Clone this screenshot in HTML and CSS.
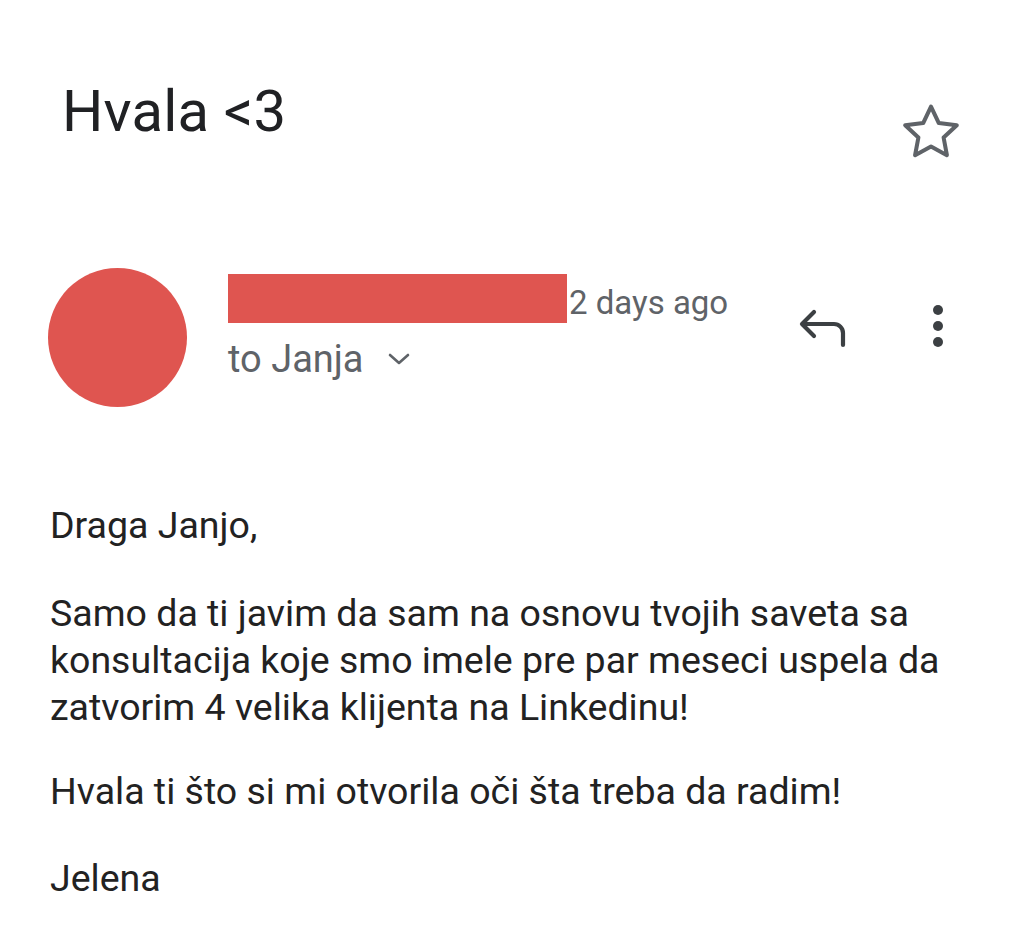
FILE: index.html
```html
<!DOCTYPE html>
<html lang="sr">
<head>
<meta charset="utf-8">
<title>Hvala &lt;3</title>
<link rel="stylesheet" href="styles.css">
</head>
<body>
<main class="mail">
  <header class="subject-row">
    <h1 class="subject">Hvala &lt;3</h1>
    <svg class="star" viewBox="0 0 24 24" aria-label="Star">
      <path d="M12 3.2l2.6 5.5 6 .7-4.4 4.1 1.1 5.9L12 16.5l-5.3 2.9 1.1-5.9-4.4-4.1 6-.7z" fill="none" stroke="#5f6368" stroke-width="1.35" stroke-linejoin="round"/>
    </svg>
  </header>

  <section class="sender-row">
    <div class="avatar"></div>
    <div class="sender-info">
      <div class="sender-line">
        <span class="redacted"></span>
        <span class="time">2 days ago</span>
      </div>
      <div class="recipient">to Janja
        <svg class="chevron" viewBox="0 0 24 14"><path d="M3 3l9 8 9-8" fill="none" stroke="#5f6368" stroke-width="2.6" stroke-linecap="round" stroke-linejoin="round"/></svg>
      </div>
    </div>
    <div class="actions">
      <svg class="reply" viewBox="0 0 52 40" aria-label="Reply">
        <path d="M46 37V25a9 9 0 0 0-9-9H6M17 4 5 16l12 12" fill="none" stroke="#3c4043" stroke-width="4.2" stroke-linecap="round" stroke-linejoin="round"/>
      </svg>
      <svg class="more" viewBox="0 0 12 44" aria-label="More">
        <circle cx="6" cy="6" r="5" fill="#3c4043"/>
        <circle cx="6" cy="22" r="5" fill="#3c4043"/>
        <circle cx="6" cy="38" r="5" fill="#3c4043"/>
      </svg>
    </div>
  </section>

  <article class="body">
    <p class="para">Draga Janjo,</p>
    <p class="para para-tight">Samo da ti javim da sam na osnovu tvojih saveta sa<br>konsultacija koje smo imele pre par meseci uspela da<br>zatvorim 4 velika klijenta na Linkedinu!</p>
    <p class="para para-mid">Hvala ti što si mi otvorila oči šta treba da radim!</p>
    <p class="para">Jelena</p>
  </article>
</main>
</body>
</html>
```

FILE: styles.css
```css
html, body {
  margin: 0;
  padding: 0;
  background: #ffffff;
}

body {
  font-family: Roboto, "Liberation Sans", sans-serif;
  color: #222222;
}

.mail {
  width: 1024px;
  height: 944px;
  box-sizing: border-box;
}

.subject-row {
  display: flex;
  justify-content: space-between;
  align-items: flex-start;
  padding: 77px 57px 0 62px;
}

.subject {
  margin: 0;
  font-weight: 400;
  font-size: 58px;
  line-height: 68px;
  color: #202124;
  letter-spacing: 0.2px;
}

.star {
  width: 72px;
  height: 72px;
  margin-top: 20px;
}

.sender-row {
  display: flex;
  align-items: flex-start;
  padding: 99px 0 0 48px;
}

.avatar {
  width: 139px;
  height: 139px;
  border-radius: 50%;
  background: #df5550;
  flex: none;
}

.sender-info {
  margin-left: 41px;
  padding-top: 6px;
  width: 520px;
}

.sender-line {
  display: flex;
  align-items: flex-start;
}

.redacted {
  display: block;
  width: 339px;
  height: 49px;
  background: #df5550;
}

.time {
  font-size: 33px;
  line-height: 49px;
  color: #5f6368;
  margin-left: 2px;
  margin-top: 4px;
}

.recipient {
  display: flex;
  align-items: center;
  font-size: 38px;
  line-height: 44px;
  color: #5f6368;
  margin-top: 10px;
}

.chevron {
  width: 24px;
  height: 14px;
  margin-left: 23px;
  margin-top: 0;
}

.actions {
  display: flex;
  align-items: flex-start;
  margin-left: 49px;
  padding-top: 36px;
}

.reply {
  width: 52px;
  height: 40px;
  margin-top: 4px;
}

.more {
  width: 12px;
  height: 44px;
  margin-left: 83px;
}

.body {
  padding: 95px 0 0 50px;
  font-size: 37.5px;
  line-height: 47px;
  color: #222222;
}

.para {
  margin: 0 0 41px 0;
}

.para-tight {
  margin-bottom: 37px;
}

.para-mid {
  margin-bottom: 40px;
}
```
